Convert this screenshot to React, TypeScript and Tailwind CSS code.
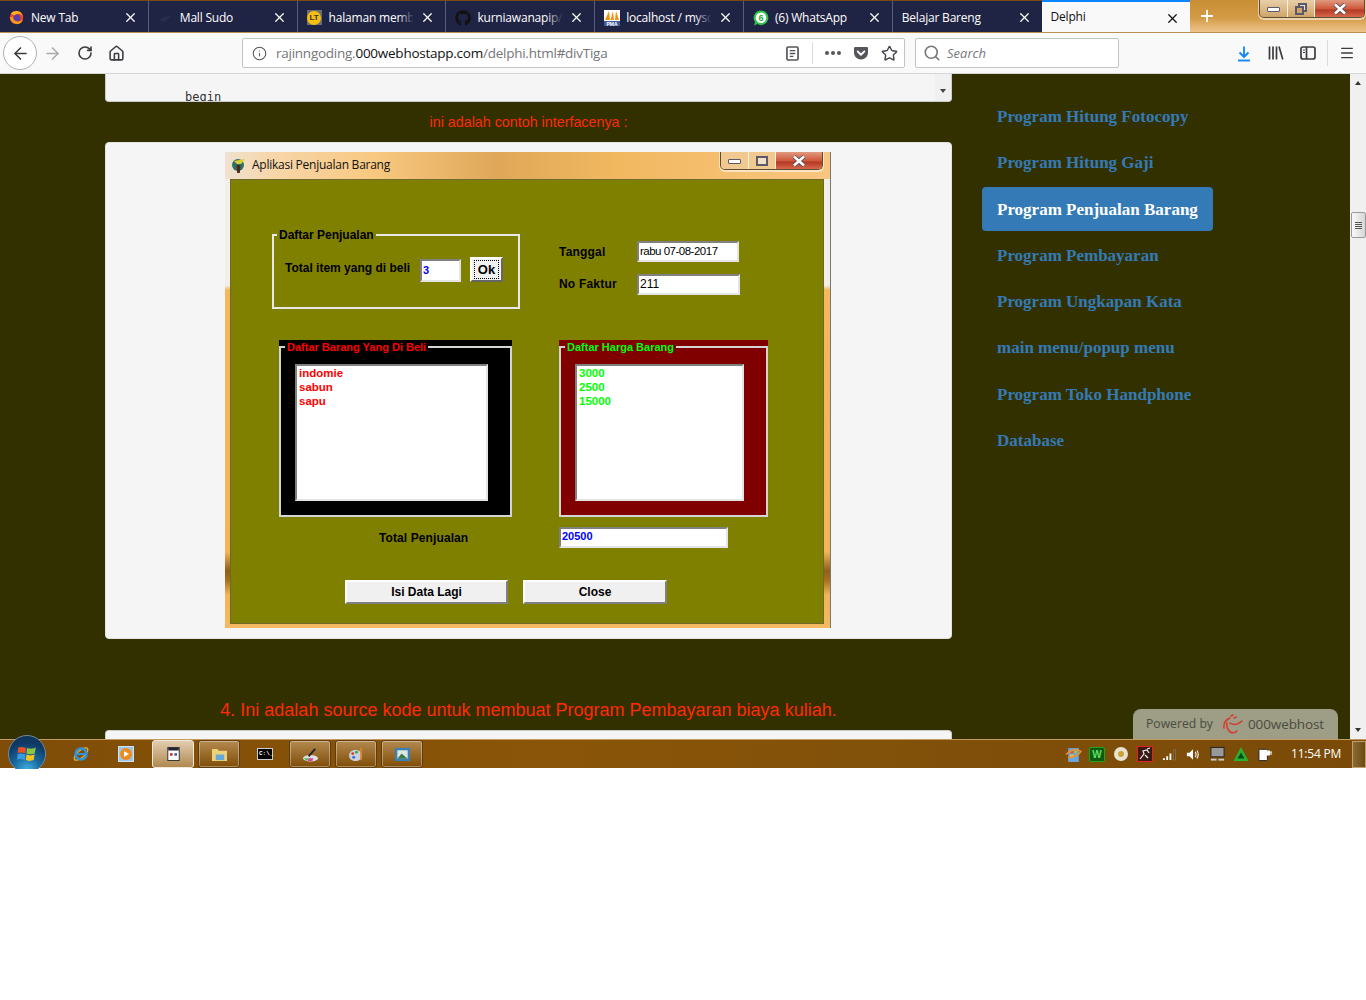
import { ArrowLeft, ArrowRight, RotateCw, House, Info, Star, Search, Menu, X, Plus } from "lucide-react";
import { FaGetPocket, FaGithub } from "react-icons/fa";
import type { ReactNode } from "react";

const sunken =
  "border-2 border-t-[#808080] border-l-[#808080] border-r-[#e4e4e4] border-b-[#e4e4e4] bg-white";
const formFont = "font-['Liberation_Sans',sans-serif] font-bold text-[12px]";

function FirefoxIcon() {
  return (
    <svg viewBox="0 0 16 16" className="w-[15px] h-[15px] shrink-0">
      <circle cx="8" cy="8" r="7.2" fill="#e8442a" />
      <path d="M2 4 Q4 0.5 9 1 Q14 2 15 8 Q14 4 10 4 Q7 4 6 6 Q4 5 2 4Z" fill="#ffb01f" />
      <circle cx="8.5" cy="8.5" r="3.6" fill="#5b3ea8" />
      <path d="M1 8 Q2 14 8 15 Q13 15 15 10 Q12 13 8 12 Q4 11 4 7Z" fill="#f79a1c" />
    </svg>
  );
}

function SudoIcon() {
  return (
    <svg viewBox="0 0 16 16" className="w-[15px] h-[15px] shrink-0">
      <path d="M1 10 L8 7 L15 6 L10 10 L6 13 Z" fill="#2a2d4c" />
    </svg>
  );
}

function LtIcon() {
  return (
    <span className="w-[15px] h-[15px] shrink-0 bg-[#6d6d6d] flex items-center justify-center">
      <span className="w-[14px] h-[14px] rounded-full bg-[#f6c012] text-[8px] leading-[14px] text-center font-bold text-[#333] font-['Liberation_Sans',sans-serif]">
        LT
      </span>
    </span>
  );
}

function PmaIcon() {
  return (
    <svg viewBox="0 0 16 16" className="w-[16px] h-[16px] shrink-0">
      <rect width="16" height="16" fill="#fff" />
      <path d="M1 10 L5 1 L6 10Z M6.500 10 L9 1 L10 10Z M11 10 L12 1 L15 10Z" fill="#f29111" />
      <rect x="0" y="11" width="16" height="5" fill="#3c5a97" />
      <text x="8" y="15.500" fontSize="5" fill="#fff" textAnchor="middle" fontWeight="700" fontFamily="Liberation Sans">PMA</text>
    </svg>
  );
}

function WhatsappIcon() {
  return (
    <svg viewBox="0 0 16 16" className="w-[16px] h-[16px] shrink-0">
      <path d="M8 0.500 A7.300 7.300 0 1 1 4.200 14 L1 15.500 L2 12 A7.300 7.300 0 0 1 8 0.500Z" fill="#2fc24a" />
      <circle cx="8" cy="7.800" r="5.300" fill="#fff" />
      <text x="8" y="10.800" fontSize="9" fill="#2fa93f" textAnchor="middle" fontWeight="700" fontFamily="Liberation Sans">6</text>
    </svg>
  );
}

type TabInfo = { title: string; icon?: ReactNode; fade?: boolean; active?: boolean };

const tabs: TabInfo[] = [
  { title: "New Tab", icon: <FirefoxIcon /> },
  { title: "Mall Sudo", icon: <SudoIcon /> },
  { title: "halaman member", icon: <LtIcon />, fade: true },
  { title: "kurniawanapip/b", icon: <FaGithub className="w-[16px] h-[16px] shrink-0 text-[#111]" />, fade: true },
  { title: "localhost / mysql", icon: <PmaIcon />, fade: true },
  { title: "(6) WhatsApp", icon: <WhatsappIcon /> },
  { title: "Belajar Bareng" },
  { title: "Delphi", active: true },
];

function Tab({ tab, last }: { tab: TabInfo; last: boolean }) {
  return (
    <div
      className={
        "w-[148.800px] h-full shrink-0 flex items-center text-[12px] font-['Open_Sans',sans-serif] relative " +
        (tab.active
          ? "bg-[#f9f9fa] text-[#111] border-t-2 border-t-[#0a84ff] pl-[9px]"
          : "bg-[#1f2344] text-white pl-[9px] pt-[2px] border-t border-t-[#7b4b12] " + (last ? "" : "border-r border-r-[#5a5d78]"))
      }
    >
      {tab.icon && <span className="flex w-[22px] shrink-0 items-center">{tab.icon}</span>}
      <span className="overflow-hidden whitespace-nowrap tracking-[-0.2px]">{tab.title}</span>
      {tab.fade && (
        <span className="absolute left-[100px] right-[31px] top-0 bottom-0 bg-gradient-to-r from-transparent to-[#1f2344]" />
      )}
      <span className={"absolute right-[3px] top-0 bottom-0 w-[29px] flex items-center justify-center pt-[2px] " + (tab.active ? "bg-[#f9f9fa]" : "bg-[#1f2344]")}>
        <X size={15} strokeWidth={2} className={tab.active ? "text-[#111]" : "text-white"} />
      </span>
    </div>
  );
}

function CaptionButtons({ small }: { small?: boolean }) {
  const side = small ? "bg-[#f0c890]" : "bg-[linear-gradient(#e8cfa8,#cfa468)]";
  return (
    <div
      className={
        "flex h-[18px] rounded-b-[5px] border border-t-0 border-[#5d4d36] overflow-hidden shadow-[0_1px_0_1px_rgba(255,255,255,0.55)] " +
        (small ? "w-[103px]" : "w-[106px]")
      }
    >
      <div className={"w-[28px] border-r border-r-[#fff2de] flex items-center justify-center " + side}>
        <span className="mt-[2px] w-[13px] h-[5px] bg-white border border-[#5a5a6a] rounded-[1px]" />
      </div>
      <div className={"w-[27px] border-r border-r-[#fff2de] flex items-center justify-center " + side}>
        {small ? (
          <span className="w-[12px] h-[10px] border-2 border-[#5a5a6a] bg-[#f0e0c8]" />
        ) : (
          <span className="relative w-[12px] h-[12px]">
            <span className="absolute right-0 top-0 w-[9px] h-[9px] border-2 border-[#5a5a6a] bg-[#e8e4dc]" />
            <span className="absolute left-0 bottom-0 w-[9px] h-[9px] border-2 border-[#5a5a6a] bg-[#cfa468]" />
          </span>
        )}
      </div>
      <div className="flex-1 bg-[linear-gradient(#e09a80_0%,#cf5a3c_50%,#b53a26_60%,#d8684a_100%)] flex items-center justify-center">
        <svg viewBox="0 0 14 12" className="w-[14px] h-[12px]">
          <path d="M2 1.500 L12 10.500 M12 1.500 L2 10.500" stroke="#4a4a5a" strokeWidth="4.200" />
          <path d="M2 1.500 L12 10.500 M12 1.500 L2 10.500" stroke="#fff" strokeWidth="2.600" />
        </svg>
      </div>
    </div>
  );
}

function TabBar() {
  return (
    <div className="h-[33px] shrink-0 flex bg-[linear-gradient(180deg,#c98e34_0%,#d39a46_55%,#eec48a_100%)] border-b border-b-[#b9904f] relative">
      {tabs.map((tab, i) => (
        <Tab key={tab.title} tab={tab} last={i === 6} />
      ))}
      <Plus size={18} strokeWidth={2.400} className="text-white ml-[8px] mt-[7px]" />
      <div className="ml-auto mr-[1px]">
        <CaptionButtons />
      </div>
    </div>
  );
}

function NavBar() {
  return (
    <div className="h-[41px] shrink-0 bg-[#f9f9fa] border-b border-[#d6d6d8] flex items-center relative text-[#3c3c40]">
      <div className="ml-[3px] w-[34px] h-[34px] rounded-full border border-[#b0b0b2] bg-white flex items-center justify-center">
        <ArrowLeft size={19} strokeWidth={2} />
      </div>
      <ArrowRight size={19} strokeWidth={2} className="ml-[6px] text-[#ababae]" />
      <RotateCw size={16} strokeWidth={2.400} className="ml-[15px]" />
      <House size={17} strokeWidth={2.200} className="ml-[15px]" />
      <div className="ml-[117px] w-[663px] h-[30px] bg-white border border-[#c4c4c6] rounded-[2px] flex items-center">
        <Info size={15} strokeWidth={1.700} className="ml-[9px] text-[#55555a]" />
        <span className="ml-[9px] mt-[1px] text-[13.500px] font-['Open_Sans',sans-serif] text-[#75757a] tracking-[-0.25px]">
          rajinngoding.<span className="text-[#111]">000webhostapp.com</span>/delphi.html#divTiga
        </span>
        <svg viewBox="0 0 14 16" className="ml-auto w-[13px] h-[15px]">
          <rect x="1" y="1" width="12" height="14" rx="1.500" fill="none" stroke="#55555a" strokeWidth="1.800" />
          <path d="M4 5h6M4 8h6M4 11h4" stroke="#55555a" strokeWidth="1.400" />
        </svg>
        <div className="ml-[13px] h-[22px] w-px bg-[#dcdcde]" />
        <span className="ml-[12px] flex gap-[2px]">
          <span className="w-[4px] h-[4px] rounded-full bg-[#55555a]" />
          <span className="w-[4px] h-[4px] rounded-full bg-[#55555a]" />
          <span className="w-[4px] h-[4px] rounded-full bg-[#55555a]" />
        </span>
        <FaGetPocket size={16} className="ml-[12px] text-[#55555a]" />
        <Star size={17} strokeWidth={2} className="ml-[12px] mr-[6px] text-[#44444a]" />
      </div>
      <div className="ml-[10px] w-[204px] h-[30px] bg-white border border-[#c4c4c6] rounded-[2px] flex items-center">
        <Search size={18} strokeWidth={2.200} className="ml-[7px] text-[#77777c]" />
        <span className="ml-[6px] mt-[1px] text-[13px] italic font-['Open_Sans',sans-serif] text-[#77777c]">Search</span>
      </div>
      <svg viewBox="0 0 14 16" className="ml-[118px] w-[14px] h-[17px]">
        <path d="M7 1 V11 M2.500 7 L7 11.500 L11.500 7" fill="none" stroke="#0a84ff" strokeWidth="1.800" />
        <path d="M1 15 H13" stroke="#0a84ff" strokeWidth="1.800" />
      </svg>
      <svg viewBox="0 0 16 16" className="ml-[17px] w-[16px] h-[16px]">
        <path d="M1.500 1.500 V14.500 M5 1.500 V14.500 M8.500 1.500 V14.500 M11 1.500 L14.800 14.500" fill="none" stroke="#3c3c40" strokeWidth="1.700" />
      </svg>
      <svg viewBox="0 0 16 16" className="ml-[16px] w-[16px] h-[16px]">
        <rect x="1" y="2" width="14" height="12" rx="2" fill="none" stroke="#3c3c40" strokeWidth="1.700" />
        <path d="M6.500 2 V14" stroke="#3c3c40" strokeWidth="1.700" />
        <path d="M3 5h2M3 7.500h2" stroke="#3c3c40" strokeWidth="1" />
      </svg>
      <div className="ml-[11px] h-[26px] w-px bg-[#dcdcde]" />
      <Menu size={16} strokeWidth={2} className="ml-[11px]" />
    </div>
  );
}

const sideItems = [
  "Program Hitung Fotocopy",
  "Program Hitung Gaji",
  "Program Penjualan Barang",
  "Program Pembayaran",
  "Program Ungkapan Kata",
  "main menu/popup menu",
  "Program Toko Handphone",
  "Database",
];

function Sidebar() {
  return (
    <ul className="ml-[30px] pt-[20px] flex flex-col gap-[2px] items-start font-['Liberation_Serif',serif] font-bold text-[17px] leading-[24.280px]">
      {sideItems.map((item, i) => (
        <li
          key={item}
          className={
            "px-[15px] pt-[11px] pb-[9px] rounded-[4px] " +
            (i === 2 ? "bg-[#337ab7] text-white" : "text-[#337ab7]")
          }
        >
          {item}
        </li>
      ))}
    </ul>
  );
}

function GroupList({ tone, legend, items, listWidth, width }: { tone: string; legend: string; items: string[]; listWidth: string; width: string }) {
  const dark = tone === "black";
  return (
    <div className={(dark ? "bg-black " : "bg-[#800000] ") + width + " h-[177px] pt-[6px] relative"}>
      <div className={"h-full border-2 border-[#d4d4d4] pt-[16px] pl-[14px] " + (dark ? "text-[#ff0000]" : "text-[#00ff00]")}>
        <div className={sunken + " " + listWidth + " h-[137px] pl-[2px] text-[11.500px] leading-[14px] font-['Liberation_Sans',sans-serif] font-bold"}>
          {items.map((it) => (
            <div key={it}>{it}</div>
          ))}
        </div>
      </div>
      <span className={"absolute left-[6px] top-0 px-[2px] text-[11px] leading-[14px] font-['Liberation_Sans',sans-serif] font-bold whitespace-nowrap " + (dark ? "bg-black text-[#ff0000]" : "bg-[#800000] text-[#00ff00]")}>
        {legend}
      </span>
    </div>
  );
}

function RaisedButton({ label, width }: { label: string; width: string }) {
  return (
    <div className={width + " h-[24px] bg-[#f0f0f0] border-2 border-t-white border-l-white border-r-[#808080] border-b-[#808080] flex items-center justify-center " + formFont}>
      {label}
    </div>
  );
}

function DelphiForm() {
  return (
    <div className="flex-1 mr-[1px] mb-[4px] bg-[#808000] border border-[#6d6a2a] pl-[41px] pt-[54px] text-black">
      <div className="flex">
        <div className="relative w-[248px] h-[75px] border-2 border-[#e8e8e8]">
          <span className={"absolute left-[3px] -top-[8px] px-[2px] bg-[#808000] leading-[14px] " + formFont}>
            Daftar Penjualan
          </span>
          <div className="flex pl-[11px] pt-[23px]">
            <span className={"leading-[14px] mt-[2px] whitespace-nowrap w-[136px] " + formFont}>Total item yang di beli</span>
            <div className={sunken + " w-[41px] h-[23px] ml-[-1px] text-[#0000ff] pl-[1px] text-[11px] leading-[19px] font-['Liberation_Sans',sans-serif] font-bold"}>3</div>
            <div className="w-[33px] h-[25px] ml-[9px] -mt-[2px] bg-[#f0f0f0] border-2 border-t-white border-l-white border-r-[#666] border-b-[#666] flex items-center justify-center">
              <span className="border border-dotted border-black w-[25px] h-[19px] flex items-center justify-center font-['Liberation_Sans',sans-serif] font-bold text-[13px]">Ok</span>
            </div>
          </div>
        </div>
        <div className="ml-[39px] mt-[7px] flex flex-col gap-[12px]">
          <div className="flex items-center">
            <span className={"w-[78px] tracking-[0.2px] " + formFont}>Tanggal</span>
            <div className={sunken + " w-[102px] h-[21px] pl-[1px] text-[11.500px] leading-[17px] font-['Liberation_Sans',sans-serif] tracking-[-0.5px]"}>rabu 07-08-2017</div>
          </div>
          <div className="flex items-center">
            <span className={"w-[78px] tracking-[0.2px] -mt-[2px] " + formFont}>No Faktur</span>
            <div className={sunken + " w-[103px] h-[21px] pl-[1px] text-[12px] leading-[17px] font-['Liberation_Sans',sans-serif]"}>211</div>
          </div>
        </div>
      </div>
      <div className="flex ml-[7px] mt-[31px] gap-[47px]">
        <GroupList tone="black" legend="Daftar Barang Yang Di Beli" items={["indomie", "sabun", "sapu"]} width="w-[233px]" listWidth="w-[193px]" />
        <GroupList tone="maroon" legend="Daftar Harga Barang" items={["3000", "2500", "15000"]} width="w-[209px]" listWidth="w-[169px]" />
      </div>
      <div className="flex items-center mt-[10px]">
        <span className={"ml-[107px] w-[180px] tracking-[0.1px] " + formFont}>Total Penjualan</span>
        <div className={sunken + " w-[169px] h-[21px] pl-[1px] text-[11px] leading-[15px] text-[#0000ff] font-['Liberation_Sans',sans-serif] font-bold"}>20500</div>
      </div>
      <div className="flex ml-[73px] mt-[32px] gap-[15px]">
        <RaisedButton label="Isi Data Lagi" width="w-[163px]" />
        <RaisedButton label="Close" width="w-[144px]" />
      </div>
    </div>
  );
}

function DelphiWindow() {
  return (
    <div className="w-[606px] h-[476px] flex flex-col px-[5px] bg-[linear-gradient(180deg,#f3efe8_0%,#f3efe8_28%,#f4b75e_29%,#f2b55a_84%,#8f5f1c_88%,#a8701e_90%,#f0b45a_93%,#f4ba62_100%)] border-r border-[#777]">
      <div className="h-[27px] shrink-0 -mx-[5px] flex items-center bg-[linear-gradient(90deg,#efe2d0_0%,#f7d6a8_8%,#f8c880_25%,#dfa758_45%,#f2b860_65%,#f7c680_100%)] relative">
        <svg viewBox="0 0 16 16" className="ml-[6px] w-[16px] h-[16px]">
          <circle cx="7" cy="7" r="6" fill="#2f6f6a" />
          <path d="M3 3 L14 1 L10 6 L6 6Z" fill="#d8d030" />
          <path d="M5.500 7 H9.500 L8.800 15 H6.200Z" fill="#4a2a1a" />
        </svg>
        <span className="ml-[5px] text-[12px] font-['Open_Sans',sans-serif] text-[#111] tracking-[-0.25px] -mt-[2px]">Aplikasi Penjualan Barang</span>
        <div className="absolute right-[7px] top-0">
          <CaptionButtons small />
        </div>
      </div>
      <DelphiForm />
    </div>
  );
}

function MainColumn() {
  return (
    <div className="w-[847px] ml-[105px] shrink-0">
      <div className="h-[28px] bg-[#f5f5f5] border border-t-0 border-[#ccc] rounded-b-[4px] relative overflow-hidden">
        <pre className="absolute left-[79px] top-[16px] text-[12px] leading-[14px] text-[#333] font-['DejaVu_Sans_Mono',monospace]">begin</pre>
        <div className="absolute right-0 top-0 bottom-0 w-[16px] bg-[#f0f0f0] flex items-end justify-center pb-[8px]">
          <span className="border-x-[3.500px] border-x-transparent border-t-[4px] border-t-[#444]" />
        </div>
      </div>
      <p className="mt-[10px] text-center text-[14.300px] leading-[20px] text-[#ff2a00] font-['Liberation_Sans',sans-serif]">
        ini adalah contoh interfacenya :
      </p>
      <div className="mt-[10px] h-[497px] bg-[#f5f5f5] border border-[#e3e3e3] rounded-[4px] pt-[9px] pl-[119px]">
        <DelphiWindow />
      </div>
      <h3 className="mt-[61px] text-center text-[18px] leading-[20px] text-[#ff2a00] font-['Liberation_Sans',sans-serif]">
        4. Ini adalah source kode untuk membuat Program Pembayaran biaya kuliah.
      </h3>
      <div className="mt-[10px] h-[12px] bg-[#f5f5f5] border border-b-0 border-[#ccc] rounded-t-[4px]" />
    </div>
  );
}

function Scrollbar() {
  return (
    <div className="ml-auto w-[16px] h-full bg-[#f0f0f0] flex flex-col items-center relative">
      <span className="mt-[7px] border-x-[3.500px] border-x-transparent border-b-[4px] border-b-[#333]" />
      <div className="mt-[127px] w-[15px] h-[26px] bg-[linear-gradient(90deg,#fafafa,#d6d6d6)] border border-[#9a9a9a] rounded-[2px] flex flex-col items-center justify-center gap-[1px]">
        <span className="w-[7px] h-px bg-[#555]" />
        <span className="w-[7px] h-px bg-[#555]" />
        <span className="w-[7px] h-px bg-[#555]" />
        <span className="w-[7px] h-px bg-[#555]" />
      </div>
      <span className="mt-auto mb-[7px] border-x-[3.500px] border-x-transparent border-t-[4px] border-t-[#333]" />
    </div>
  );
}

function PoweredBy() {
  return (
    <div className="absolute right-[28px] bottom-0 w-[205px] h-[30px] bg-[#9d9e85] rounded-t-[8px] flex items-center pl-[13px] text-[12.200px] text-[#4b4b42] font-['Open_Sans',sans-serif]">
      Powered by
      <svg viewBox="0 0 24 20" className="ml-[7px] w-[24px] h-[20px]">
        <path d="M10 4 Q3 7 4 14 M7 9 Q6 14 10 18 Q14 20 17 17 M10 9 Q15 13 22 7 M11 2 L13 1 M14 4 L16 3" fill="none" stroke="#d9372f" strokeWidth="1.500" strokeLinecap="round" />
      </svg>
      <span className="ml-[4px] text-[13.500px] tracking-[-0.1px]">000webhost</span>
    </div>
  );
}

function TaskButton({ children, active }: { children: ReactNode; active?: boolean }) {
  return (
    <div
      className={
        "w-[42px] h-[28px] rounded-[3px] flex items-center justify-center border " +
        (active
          ? "border-[#f2e8d8] bg-[linear-gradient(#e2cdb0,#b08850)]"
          : "border-[#5d3d10] shadow-[inset_0_0_0_1px_rgba(255,255,255,0.35)] bg-[linear-gradient(#b48a50,#7f4d07)]")
      }
    >
      {children}
    </div>
  );
}

function WindowsOrb() {
  return (
    <div className="absolute left-[8px] -top-[5px] w-[38px] h-[34px] overflow-hidden">
      <div className="w-[38px] h-[38px] rounded-full bg-[radial-gradient(circle_at_50%_95%,#3fb4e6_0%,#1a6aa0_35%,#0f3a66_70%,#123050_100%)] border border-[#6f8aa0] flex items-center justify-center">
        <svg viewBox="0 0 20 20" className="w-[22px] h-[22px]">
          <path d="M2 4 Q5 3 9 4.500 L8.500 9.500 Q5 8 1.500 9Z" fill="#e9502a" />
          <path d="M10 4.500 Q14 6 18 4 L17 9.500 Q13 11 9.500 9.500Z" fill="#8fc63f" />
          <path d="M1.500 10 Q5 9 8.500 10.500 L8 15.500 Q4 14 1 15Z" fill="#3a9be0" />
          <path d="M9.500 10.500 Q13 12 17 10.500 L16 15.500 Q12 17 9 15.500Z" fill="#f8c51c" />
        </svg>
      </div>
    </div>
  );
}

function TrayIcon({ children }: { children: ReactNode }) {
  return <span className="w-[24px] flex justify-center">{children}</span>;
}

function Taskbar() {
  return (
    <div className="h-[29px] shrink-0 relative border-t border-[#c49a5e] bg-[linear-gradient(90deg,#7f4d07,#8a5508_40%,#80500a_70%,#7a4a08)] flex items-center">
      <WindowsOrb />
      <svg viewBox="0 0 18 18" className="ml-[72px] w-[18px] h-[18px]">
        <ellipse cx="9" cy="9" rx="8.500" ry="3.500" transform="rotate(-40 9 9)" fill="none" stroke="#e3b231" strokeWidth="1.300" />
        <circle cx="9" cy="9" r="5.500" fill="none" stroke="#2f94dd" strokeWidth="2.500" />
        <path d="M4 9 H14" stroke="#2f94dd" strokeWidth="2" />
      </svg>
      <div className="ml-[28px] w-[16px] h-[16px] bg-[#9cc7e6] border border-[#cfe2f0] flex items-center justify-center">
        <span className="w-[12px] h-[12px] rounded-full bg-[#f08a1d] flex items-center justify-center">
          <span className="border-y-[3px] border-y-transparent border-l-[5px] border-l-white ml-[1px]" />
        </span>
      </div>
      <div className="ml-[18px] flex gap-[4px]">
        <TaskButton active>
          <svg viewBox="0 0 14 16" className="w-[13px] h-[14px]">
            <rect x="0.500" y="0.500" width="13" height="15" fill="#fff" stroke="#222" />
            <rect x="1" y="1" width="12" height="3" fill="#223" />
            <rect x="3" y="7" width="3" height="3" fill="#c33" />
            <rect x="8" y="7" width="3" height="3" fill="#36b" />
          </svg>
        </TaskButton>
        <TaskButton>
          <svg viewBox="0 0 18 16" className="w-[17px] h-[15px]">
            <path d="M1 2 H7 L8 4 H17 V15 H1Z" fill="#ecd27a" />
            <rect x="5" y="8" width="9" height="6" fill="#68a8d8" />
          </svg>
        </TaskButton>
      </div>
      <div className="ml-[17px] w-[16px] h-[12px] bg-black border border-[#ccc] text-[6px] leading-[10px] text-white font-bold font-['Liberation_Mono',monospace] pl-[1px]">C:\_</div>
      <div className="ml-[16px] flex gap-[4px]">
        <TaskButton>
          <svg viewBox="0 0 18 16" className="w-[17px] h-[15px]">
            <ellipse cx="9" cy="12" rx="8" ry="3.500" fill="#e0e0e0" />
            <path d="M2 12 H7 L5 15Z" fill="#2cc04a" />
            <path d="M7 12 H12 L11 15 H6Z" fill="#d8409a" />
            <path d="M7 10 L14 2" stroke="#222" strokeWidth="2" />
          </svg>
        </TaskButton>
        <TaskButton>
          <svg viewBox="0 0 18 16" className="w-[17px] h-[15px]">
            <ellipse cx="8" cy="9" rx="7" ry="6" fill="#c9d2de" />
            <circle cx="5" cy="7" r="1.500" fill="#d33" />
            <circle cx="9" cy="5.500" r="1.500" fill="#3a3" />
            <circle cx="6" cy="11" r="1.500" fill="#36c" />
            <path d="M14 1 V14" stroke="#e08020" strokeWidth="2" />
          </svg>
        </TaskButton>
        <TaskButton>
          <svg viewBox="0 0 18 16" className="w-[17px] h-[15px]">
            <rect x="1" y="1" width="16" height="14" fill="#3a7fb8" />
            <rect x="3.500" y="3.500" width="11" height="9" fill="#dfe8e0" />
            <path d="M3.500 12.500 L8 7 L14.500 12.500Z" fill="#3c7a4a" />
          </svg>
        </TaskButton>
      </div>
      <div className="ml-auto flex items-center">
        <TrayIcon>
          <svg viewBox="0 0 16 16" className="w-[17px] h-[17px]">
            <rect x="3" y="2" width="10" height="13" fill="#6aa6e0" />
            <rect x="5" y="4" width="3" height="3" fill="#e9502a" />
            <rect x="8.500" y="4" width="3" height="3" fill="#8fc63f" />
            <rect x="5" y="8" width="3" height="3" fill="#f8c51c" />
            <path d="M1 8 Q8 1 15 5 Q12 10 3 11" fill="none" stroke="#f09030" strokeWidth="1.400" />
          </svg>
        </TrayIcon>
        <TrayIcon>
          <span className="w-[16px] h-[15px] bg-[#0f5a12] border border-[#1ea51f] rounded-[2px] text-[#5fe05f] text-[10px] leading-[13px] text-center font-bold font-['Liberation_Sans',sans-serif]">W</span>
        </TrayIcon>
        <TrayIcon>
          <span className="w-[14px] h-[14px] rounded-full bg-[#c9a23a] border-[4px] border-[#e8e3d0]" />
        </TrayIcon>
        <TrayIcon>
          <svg viewBox="0 0 16 16" className="w-[16px] h-[16px]">
            <rect x="0.500" y="0.500" width="15" height="15" fill="#3a1a14" stroke="#e62020" />
            <path d="M3 13 L7 8 L6 5 L10 4 L12 7 M8 9 L11 12 M10 3 L13 2" fill="none" stroke="#eee" strokeWidth="1.200" />
          </svg>
        </TrayIcon>
        <TrayIcon>
          <svg viewBox="0 0 16 14" className="w-[15px] h-[13px]">
            <path d="M1 11h2v2H1z M4.500 9h2v4h-2z M8 6h2v7H8z" fill="#fff" />
            <path d="M12.500 2h2v11h-2z" fill="#5a3f1c" stroke="#b89a70" strokeWidth="0.500" />
          </svg>
        </TrayIcon>
        <TrayIcon>
          <svg viewBox="0 0 16 16" className="w-[14px] h-[15px]">
            <path d="M1 6 H4 L8 2 V14 L4 10 H1Z" fill="#fff" />
            <path d="M10.500 5 Q12.500 8 10.500 11 M12.500 3.500 Q15.500 8 12.500 12.500" fill="none" stroke="#fff" strokeWidth="1.200" />
          </svg>
        </TrayIcon>
        <TrayIcon>
          <svg viewBox="0 0 16 16" className="w-[15px] h-[16px]">
            <rect x="1" y="1" width="14" height="10" fill="#999" stroke="#222" />
            <rect x="1" y="13" width="6" height="2" fill="#ccc" />
            <rect x="9" y="13" width="6" height="2" fill="#ccc" />
          </svg>
        </TrayIcon>
        <TrayIcon>
          <svg viewBox="0 0 16 16" className="w-[16px] h-[16px]">
            <path d="M8 1 L15.500 15 H0.500Z" fill="#26b232" />
            <path d="M8 6.500 L11.500 12.500 H4.500Z" fill="#0a4a1a" />
          </svg>
        </TrayIcon>
        <TrayIcon>
          <svg viewBox="0 0 16 16" className="w-[15px] h-[16px]">
            <rect x="1" y="3" width="9" height="12" rx="1" fill="#fff" stroke="#222" />
            <path d="M7 5 H12 V9 H7Z M12 6 H15 M12 8 H15" fill="#fff" stroke="#fff" strokeWidth="1.300" />
          </svg>
        </TrayIcon>
        <span className="ml-[14px] w-[50px] text-[12px] text-white font-['Open_Sans',sans-serif] tracking-[-0.2px] whitespace-nowrap">11:54 PM</span>
        <div className="ml-[11px] w-[14px] h-[27px] bg-[linear-gradient(90deg,#8a6a30,#6e4a12)] border border-[#c0a070]" />
      </div>
    </div>
  );
}

export default function App() {
  return (
    <div className="w-[1366px] h-[1000px] bg-white overflow-hidden">
      <div className="h-[768px] flex flex-col">
        <TabBar />
        <NavBar />
        <div className="flex-1 bg-[#333000] flex relative overflow-hidden">
          <MainColumn />
          <Sidebar />
          <Scrollbar />
          <PoweredBy />
        </div>
        <Taskbar />
      </div>
    </div>
  );
}
